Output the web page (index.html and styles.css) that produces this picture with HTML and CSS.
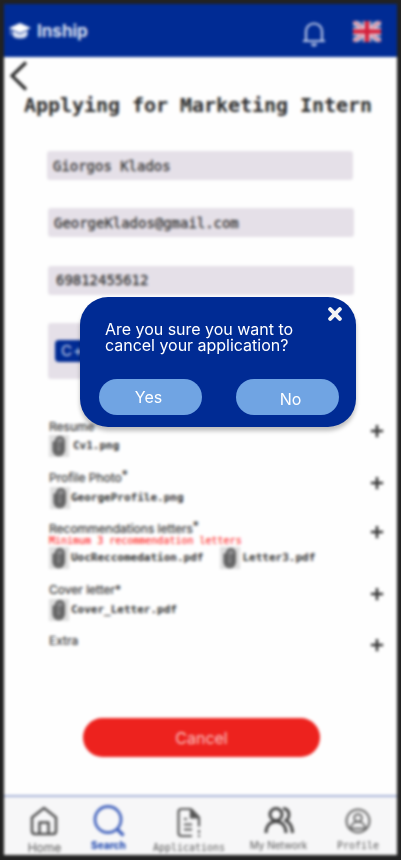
FILE: index.html
```html
<!DOCTYPE html>
<html lang="en">
<head>
<meta charset="utf-8">
<title>Inship</title>
<link rel="stylesheet" href="styles.css">
</head>
<body>
<svg class="defs" aria-hidden="true">
  <symbol id="clip" viewBox="0 0 20 22">
    <rect width="20" height="22" fill="#dedede"/>
    <path d="M4.500 6.500v8.500a5.200 5.200 0 0 0 10.400 0V6a4 4 0 0 0-8 0v8.500a2.800 2.800 0 0 0 5.600 0V7" fill="#929294" stroke="#5a5a5a" stroke-width="2"/>
    <path d="M9.700 7v7" stroke="#666" stroke-width="1.500"/>
  </symbol>
  <symbol id="plus" viewBox="0 0 16 16"><path d="M8 1v14M1 8h14" stroke="#303030" stroke-width="2.800"/></symbol>
</svg>
<div class="phone">
  <header class="top">
    <svg class="cap" viewBox="0 0 22 18"><path d="M11 1 0 6l11 5 11-5z" fill="#fff"/><path d="M3.500 8.500 11 12l7.500-3.500v4.500q-1.500 3.500-7.500 3.500t-7.500-3.500z" fill="#dfe5f4"/><path d="M1.500 7v6" stroke="#8fa3d4"/></svg>
    <span class="brand">Inship</span>
    <svg class="bell" viewBox="0 0 26 28"><path d="M5 19.500V10.500a8 8 0 0 1 16 0V19.500M2 20h22" fill="none" stroke="#bac7e8" stroke-width="2.200"/><path d="M10 22.500a3 3 0 0 0 6 0z" fill="#bac7e8"/></svg>
    <svg class="flag" viewBox="0 0 28 21"><rect width="28" height="21" fill="#3557a5"/><path d="M0 0 28 21M28 0 0 21" stroke="#dbe0ee" stroke-width="5"/><path d="M0 0 28 21M28 0 0 21" stroke="#d95a70" stroke-width="1.500"/><path d="M14 0v21M0 10.500h28" stroke="#e9e5ed" stroke-width="7"/><path d="M14 0v21M0 10.500h28" stroke="#d41f3a" stroke-width="4.500"/></svg>
  </header>
  <main>
    <svg class="back" viewBox="0 0 18 30"><path d="M16 1.500 2 14.800 16 28.500" fill="none" stroke="#252525" stroke-width="3.200"/></svg>
    <h1>Applying for Marketing Intern</h1>
    <div class="field name">Giorgos Klados</div>
    <div class="field mail">GeorgeKlados@gmail.com</div>
    <div class="field tel">69812455612</div>
    <div class="skills"><span class="chip">C++</span></div>
    <section class="docs resume">
      <div class="info"><h2>Resume<sup>*</sup></h2><div class="files"><span class="file"><svg><use href="#clip"/></svg>Cv1.png</span></div></div>
      <svg class="plus"><use href="#plus"/></svg>
    </section>
    <section class="docs photo">
      <div class="info"><h2>Profile Photo<sup>*</sup></h2><div class="files"><span class="file"><svg><use href="#clip"/></svg>GeorgeProfile.png</span></div></div>
      <svg class="plus"><use href="#plus"/></svg>
    </section>
    <section class="docs letters">
      <div class="info"><h2>Recommendations letters<sup>*</sup></h2><p>Minimum 3 recommendation letters</p><div class="files"><span class="file first">
        <svg><use href="#clip"/></svg>UocReccomedation.pdf</span><span class="file"><svg><use href="#clip"/></svg>Letter3.pdf</span></div></div>
      <svg class="plus"><use href="#plus"/></svg>
    </section>
    <section class="docs cover">
      <div class="info"><h2>Cover letter*</h2><div class="files"><span class="file"><svg><use href="#clip"/></svg>Cover_Letter.pdf</span></div></div>
      <svg class="plus"><use href="#plus"/></svg>
    </section>
    <section class="docs extra">
      <div class="info"><h2>Extra</h2></div>
      <svg class="plus"><use href="#plus"/></svg>
    </section>
    <button class="cancel">Cancel</button>
  </main>
  <nav>
    <a class="home"><svg viewBox="0 0 34 34"><path d="M5 13.500 17 4l12 9.500v13.500q0 3-3 3H8q-3 0-3-3zM12.500 30V18.500h9V30" fill="none" stroke="#505050" stroke-width="2.500" stroke-linejoin="round"/></svg><span>Home</span></a>
    <a class="search"><svg viewBox="0 0 34 34"><circle cx="16" cy="15.500" r="13" fill="none" stroke="#4565be" stroke-width="2.800"/><path d="m25 25 6.500 6.500" stroke="#4565be" stroke-width="3.500"/></svg><span>Search</span></a>
    <a class="apps"><svg viewBox="0 0 34 34"><path d="M19 4H9.500Q6.500 4 6.500 7v21q0 3 3 3H20M19 4l8 8.500v9M19 4v8.500h8M12 19.500h8M12 24.500h8M12 14h3" fill="none" stroke="#555" stroke-width="2.200"/><path d="M19 4v8.500h8z" fill="#555"/><path d="M27 25v3M27 30v2" stroke="#555" stroke-width="2"/></svg><span>Applications</span></a>
    <a class="network"><svg viewBox="0 0 34 34"><circle cx="14" cy="10.500" r="6" fill="none" stroke="#444" stroke-width="3"/><path d="M4 29c0-7 4-11.500 10-11.500S24 22 24 29M21 4.500c7 .5 7.500 8.500 3 12 4 2.500 6.500 6.500 6.500 12.500" fill="none" stroke="#444" stroke-width="3"/></svg><span>My Network</span></a>
    <a class="profile"><svg viewBox="0 0 34 34"><g fill="none" stroke="#666" stroke-width="2"><circle cx="17" cy="17" r="11.500"/><circle cx="17" cy="14" r="3.800"/><path d="M9.500 24.500c.5-4 3.500-6.700 7.500-6.700s7 2.700 7.500 6.700z"/></g></svg><span>Profile</span></a>
  </nav>
</div>
<div class="dialog" role="dialog">
  <svg class="close" viewBox="0 0 14 14"><path d="m2.200 2.200 9.600 9.600m0-9.600-9.600 9.600" stroke="#f5f5f5" stroke-width="4" stroke-linecap="round"/></svg>
  <p>Are you sure you want to<br>cancel your application?</p>
  <div class="choices"><button class="yes">Yes</button><button class="no">No</button></div>
</div>
</body>
</html>
```
FILE: styles.css
```css
* { box-sizing: border-box; }
html { background: #222; }
body { margin: 0; width: 401px; height: 860px; overflow: hidden; font-family: Inter, sans-serif; }
svg { display: block; flex: none; }
h1, h2, p { margin: 0; font-weight: 400; }
button { border: 0; padding: 0; font-family: inherit; }
.defs { position: absolute; width: 0; height: 0; }
.phone { margin: 4px 4px 0; height: 851px; background: #fefefe; display: flex; flex-direction: column; filter: blur(1.4px); }
.top { height: 53px; background: #002b94; display: flex; align-items: center; flex: none; }
.cap { width: 22px; height: 18px; margin-left: 5px; }
.brand { margin-left: 6px; color: #dce2f3; font-weight: 700; font-size: 17px; letter-spacing: 0; }
.bell { width: 26px; height: 28px; margin: 8px 0 0 auto; }
.flag { width: 28px; height: 21px; margin: 2px 16px 0 26px; }
main { flex: 1; display: flex; flex-direction: column; }
.back { width: 18px; height: 30px; margin: 4px 0 0 6px; }
h1 { margin: 2px 0 1px 20px; font: 700 20px/24px "DejaVu Sans Mono", monospace; letter-spacing: -.04px; color: #2b2b2b; white-space: nowrap; }
.field { width: 306px; height: 29px; margin-left: 44px; background: #e5e0e8; border-radius: 3px; padding-left: 6px; font: 14px/29px "DejaVu Sans Mono", monospace; letter-spacing: -.03px; color: #333; -webkit-text-stroke: .3px #333; }
.name { margin: 33px 0 0 43px; line-height: 31px; }
.mail { margin-top: 28px; line-height: 30px; }
.tel { margin-top: 29px; padding-left: 8px; }
.skills { width: 306px; height: 56px; margin: 28px 0 0 44px; background: #e5e0e8; border-radius: 3px; padding: 17px 7px; flex: none; }
.chip { display: block; width: 60px; height: 22px; border-radius: 4px; background: #002b94; color: #ccd5ed; font-size: 15px; letter-spacing: 1px; line-height: 22px; padding-left: 6px; }
.docs { display: flex; justify-content: space-between; padding: 0 13px 0 45px; flex: none; }
.docs h2 { font-size: 12px; line-height: 16px; color: #333; -webkit-text-stroke: .2px #333; }
.docs sup { font-size: 12px; line-height: 0; vertical-align: 3px; }
.docs p { font: 10px/11px "DejaVu Sans Mono", monospace; color: #f33; height: 12px; margin-top: -2px; -webkit-text-stroke: .2px #f33; }
.files { display: flex; }
.file { display: flex; align-items: center; font: 700 11px/22px "DejaVu Sans Mono", monospace; color: #333; }
.file svg { width: 20px; height: 22px; margin-right: 2px; }
.first { margin-right: 17px; }
.plus { width: 14px; height: 14px; }
.resume { margin-top: 40px; height: 51px; }
.photo { height: 51px; }
.letters { height: 61px; }
.cover { height: 51px; }
.extra { height: 18px; }
.resume .plus { margin-top: 5px; }
.photo .plus { margin-top: 6px; }
.cover .plus, .extra .plus { margin-top: 5px; }
.letters .plus { margin-top: 4px; }
.resume .file svg { margin-right: 4px; }
.photo .files { margin: 1px 0 0 1px; }
.photo .file svg { margin-right: 1px; }
.cover .files { margin-top: 1px; }
.cancel { width: 237px; height: 39px; margin: 67px 0 0 79px; border-radius: 20px; background: #ed221e; color: #fbc5c4; font-size: 16px; line-height: 40px; }
nav { height: 60px; flex: none; border-top: 2px solid #a4b1d7; background: #f7f7f8; display: grid; grid-template-columns: 81px 47px 114px 65px 86px; }
nav a { display: flex; flex-direction: column; align-items: center; padding-top: 7px; font-size: 10px; line-height: 15px; color: #555; white-space: nowrap; }
nav svg { width: 34px; height: 34px; }
.home svg { margin-top: 0; margin-right: 2px; }
.home span { font-size: 12px; line-height: 19px; }
.search { color: #234bb0; font-weight: 800; }
.profile { padding-left: 8px; }
.apps { line-height: 17px; }
.apps svg { margin-top: 1px; }
.apps, .profile { font-family: "DejaVu Sans Mono", monospace; }
.dialog { position: absolute; left: 80px; top: 297px; width: 276px; height: 130px; border-radius: 28px; background: #002b94; box-shadow: 0 4px 4px rgba(0,0,0,.25); color: #fff; font-size: 16px; padding: 10px 17px 12px 19px; display: flex; flex-direction: column; }
.close { width: 14px; height: 14px; align-self: flex-end; margin-right: -3px; }
.dialog p { line-height: 16px; margin-left: 6px; letter-spacing: -.02px; }
.choices { display: flex; justify-content: space-between; margin-top: auto; }
.choices button { width: 103px; height: 36px; border-radius: 18px; background: #70a4e3; color: #fff; font-size: 16px; }
.yes { padding-right: 4px; }
.choices .no { padding: 4px 0 0 6px; }
```
